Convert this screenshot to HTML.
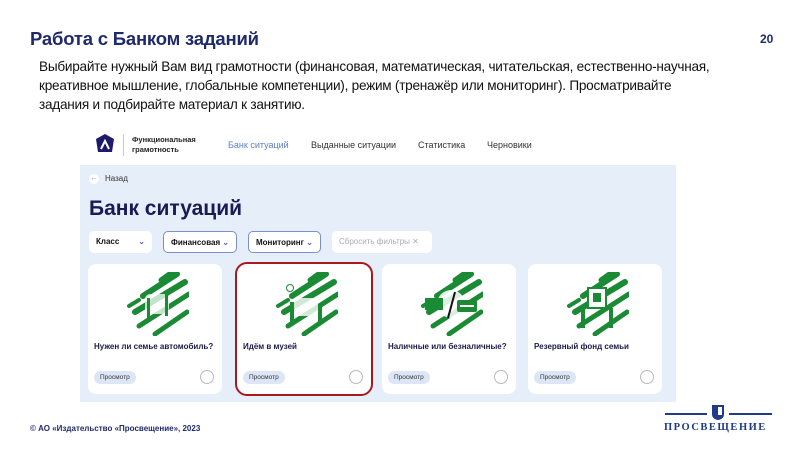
<!DOCTYPE html>
<html><head><meta charset="utf-8"><style>
*{margin:0;padding:0;box-sizing:border-box}
body{width:800px;height:450px;background:#fff;font-family:"Liberation Sans",sans-serif;position:relative;overflow:hidden}
.a{position:absolute}
h1{position:absolute;left:30px;top:28px;font-size:18.5px;color:#1f2a6b;font-weight:bold;letter-spacing:-0.2px}
.num{left:760px;top:32px;font-size:12px;font-weight:bold;color:#1f2a6b}
.intro{left:39px;top:57px;width:680px;font-size:13.6px;line-height:19px;color:#111;letter-spacing:-0.25px}
.shot{left:80px;top:125px;width:596px;height:277px;background:#e6eefa}
.hdr{left:0;top:0;width:596px;height:40px;background:#fff}
.nav{font-size:9px;color:#333;top:15px}
.card{position:absolute;top:139px;width:134px;height:130px;background:#fff;border-radius:8px}
.card .t{position:absolute;left:6px;top:78px;font-size:8px;color:#1a1a4a;font-weight:bold;white-space:nowrap}
.card .b{position:absolute;left:6px;top:107px;height:13px;padding:0 6px;border-radius:7px;background:#dde6f7;font-size:6.5px;line-height:13px;color:#333}
.card .c{position:absolute;right:8px;top:106px;width:14px;height:14px;border-radius:50%;border:1px solid #bbb}
.card svg{position:absolute;left:37px;top:8px}
.f{position:absolute;top:106px;height:22px;background:#fff;border-radius:5px;font-size:8px;font-weight:bold;line-height:22px;padding-left:7px;color:#111}
.f.o{border:1px solid #7d8fc8}
.f i{position:absolute;right:7px;top:0;color:#5b66c8;font-style:normal;font-size:8px}
</style></head><body>
<h1>Работа с Банком заданий</h1>
<div class="a num">20</div>
<div class="a intro">Выбирайте нужный Вам вид грамотности (финансовая, математическая, читательская, естественно-научная, креативное мышление, глобальные компетенции), режим (тренажёр или мониторинг). Просматривайте задания и подбирайте материал к занятию.</div>
<svg width="0" height="0" style="position:absolute"><defs><g id="bl" stroke="#1a8a35" stroke-linecap="round" fill="none">
<path d="M36 8 L50 -2" stroke-width="5"/>
<path d="M18 24 L52 2" stroke-width="6"/>
<path d="M10 40 L60 10" stroke-width="6"/>
<path d="M14 54 L64 22" stroke-width="5"/>
<path d="M30 62 L62 40" stroke-width="5"/>
<path d="M4 34 L14 28" stroke-width="4"/>
</g></defs></svg>
<div class="a shot">
 <div class="a hdr">
  <svg class="a" style="left:14px;top:8px" width="22" height="22" viewBox="0 0 22 22"><polygon points="11,1 20,6 18,19 4,19 2,6" fill="#1e1a6b"/><path d="M7 16 L11 8 L15 16" stroke="#fff" stroke-width="2" fill="none"/></svg>
  <div class="a" style="left:43px;top:9px;width:1px;height:22px;background:#ccc"></div>
  <div class="a" style="left:52px;top:10px;font-size:7.5px;font-weight:bold;line-height:10px;color:#222">Функциональная<br>грамотность</div>
  <div class="a nav" style="left:148px;color:#5b7fc8">Банк ситуаций</div>
  <div class="a nav" style="left:231px">Выданные ситуации</div>
  <div class="a nav" style="left:338px">Статистика</div>
  <div class="a nav" style="left:407px">Черновики</div>
 </div>
 <div class="a" style="left:9px;top:49px;width:10px;height:10px;border-radius:50%;background:#fff;font-size:7px;text-align:center;line-height:10px;color:#5b7fc8">←</div>
 <div class="a" style="left:25px;top:49px;font-size:8px;color:#333">Назад</div>
 <div class="a" style="left:9px;top:72px;font-size:21px;font-weight:bold;color:#1a1a55">Банк ситуаций</div>
 <div class="f" style="left:9px;width:63px">Класс<i>⌄</i></div>
 <div class="f o" style="left:83px;width:74px">Финансовая<i>⌄</i></div>
 <div class="f o" style="left:168px;width:73px">Мониторинг<i>⌄</i></div>
 <div class="f" style="left:252px;width:100px;color:#aab;font-weight:normal">Сбросить фильтры ✕</div>
 <div class="card" style="left:8px"><svg width="64" height="64" viewBox="0 0 64 64"><use href="#bl"/><rect x="20" y="22" width="24" height="20" rx="5" fill="#fff" opacity=".75"/><rect x="22" y="26" width="3" height="20" fill="#1a8a35"/><rect x="40" y="20" width="3" height="24" fill="#1a8a35"/></svg><div class="t">Нужен ли семье автомобиль?</div><div class="b">Просмотр</div><div class="c"></div></div>
 <div class="card" style="left:155px;border:2px solid #a8191f;border-radius:12px;top:137px;height:134px;width:138px"><svg width="64" height="64" viewBox="0 0 64 64"><use href="#bl"/><rect x="20" y="26" width="24" height="18" fill="#fff" opacity=".8"/><rect x="16" y="30" width="4" height="22" fill="#1a8a35"/><rect x="44" y="34" width="4" height="18" fill="#1a8a35"/><circle cx="16" cy="16" r="3.5" fill="#fff" stroke="#1a8a35"/></svg><div class="t">Идём в музей</div><div class="b">Просмотр</div><div class="c"></div></div>
 <div class="card" style="left:302px"><svg width="64" height="64" viewBox="0 0 64 64"><use href="#bl"/><circle cx="32" cy="32" r="14" fill="#fff" opacity=".85"/><rect x="6" y="26" width="18" height="12" fill="#1a8a35"/><rect x="38" y="28" width="20" height="12" rx="2" fill="#1a8a35"/><rect x="41" y="33" width="14" height="2" fill="#fff"/><path d="M36 20 L29 46" stroke="#111" stroke-width="2"/></svg><div class="t">Наличные или безналичные?</div><div class="b">Просмотр</div><div class="c"></div></div>
 <div class="card" style="left:448px"><svg width="64" height="64" viewBox="0 0 64 64"><use href="#bl"/><rect x="23" y="16" width="18" height="20" fill="#fff" stroke="#1a8a35" stroke-width="2"/><rect x="28" y="21" width="8" height="9" fill="#1a8a35"/><rect x="16" y="36" width="4" height="20" fill="#1a8a35"/><rect x="44" y="36" width="4" height="20" fill="#1a8a35"/></svg><div class="t">Резервный фонд семьи</div><div class="b">Просмотр</div><div class="c"></div></div>
</div>
<div class="a" style="left:30px;top:424px;font-size:8px;color:#1f2a6b;font-weight:bold">© АО «Издательство «Просвещение», 2023</div>
<div class="a" style="left:665px;top:413px;width:42px;height:2px;background:#1f3a8a"></div>
<div class="a" style="left:729px;top:413px;width:43px;height:2px;background:#1f3a8a"></div>
<svg class="a" style="left:710px;top:403px" width="16" height="18" viewBox="0 0 16 18"><path d="M2 2 H14 V11 Q14 16 8 17 Q2 16 2 11 Z" fill="#1f3a8a"/><rect x="8" y="4" width="4" height="8" fill="#fff"/></svg>
<div class="a" style="left:664px;top:422px;font-family:'Liberation Serif',serif;font-size:10.5px;font-weight:bold;letter-spacing:1.5px;color:#1f3a8a">ПРОСВЕЩЕНИЕ</div>
</body></html>
